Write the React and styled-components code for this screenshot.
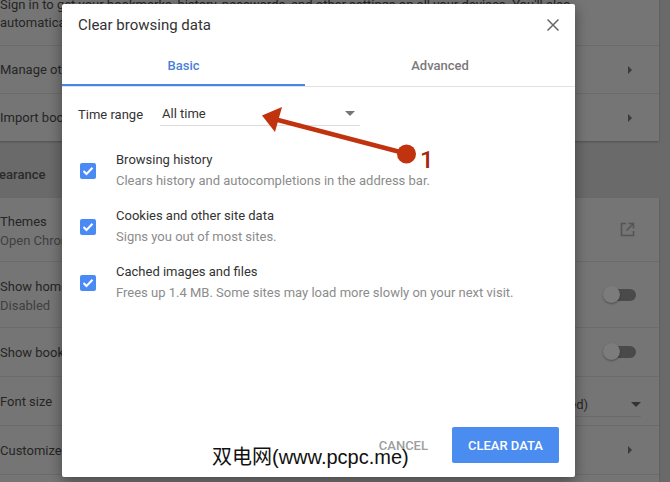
import React from "react";
import styled, { createGlobalStyle } from "styled-components";

const GlobalStyle = createGlobalStyle`
  html, body {
    margin: 0;
    padding: 0;
  }
  body {
    width: 670px;
    height: 482px;
    overflow: hidden;
    background: #6a6a6a;
    font-family: Roboto, "Liberation Sans", sans-serif;
  }
`;

const Page = styled.div`
  position: relative;
  width: 670px;
  height: 482px;
  overflow: hidden;
  background: #6a6a6a;
`;

/* dimmed settings page behind the dialog */
const SettingsColumn = styled.div`
  width: 679px;
  margin-left: -20px;
  margin-top: -14px;
`;

const Card = styled.section`
  background: #757575;
  box-shadow: 0 1px 2px rgba(0, 0, 0, 0.25);
  padding-left: 20px;
`;

const Row = styled.div`
  display: flex;
  align-items: center;
  justify-content: space-between;
  min-height: ${(p) => p.$h || 48}px;
  padding-right: ${(p) => p.$pr || 26}px;
  box-sizing: border-box;
  border-top: ${(p) => (p.$first ? "none" : "1px solid #6b6b6b")};
  font-size: 13px;
`;

const RowText = styled.div`
  display: flex;
  flex-direction: column;
  padding: ${(p) => p.$pad || "0"};
`;

const Primary = styled.span`
  color: #252525;
  line-height: ${(p) => p.$lh || 19}px;
`;

const Secondary = styled.span`
  color: #404040;
  line-height: 19px;
`;

const SectionHeading = styled.h2`
  margin: 0 0 0 -4px;
  padding: 24px 0 13px;
  line-height: 20px;
  font-size: 13px;
  font-weight: 500;
  color: #2a2a2a;
`;

const Toggle = styled.span`
  position: relative;
  width: 34px;
  height: 18px;
  display: inline-block;
`;

const Track = styled.span`
  position: absolute;
  left: 8px;
  top: 3px;
  width: 25px;
  height: 12px;
  border-radius: 6px;
  background: #4a4a4a;
`;

const Knob = styled.span`
  position: absolute;
  left: 0;
  top: 0;
  width: 17px;
  height: 17px;
  border-radius: 50%;
  background: #7c7c7c;
  box-shadow: 0 1px 2px rgba(0, 0, 0, 0.35);
`;

const FontSelect = styled.div`
  display: flex;
  align-items: center;
  justify-content: space-between;
  width: 200px;
  height: 22px;
  margin-top: 8px;
  margin-right: -8px;
  border-bottom: 1px solid #6a6a6a;
  color: #252525;
`;

const Arrow = () => (
  <svg width="6" height="10" viewBox="0 0 6 10">
    <path d="M1 1 L5 5 L1 9 Z" fill="#3a3a3a" />
  </svg>
);

const Caret = ({ color }) => (
  <svg width="10" height="5" viewBox="0 0 10 5">
    <path d="M0 0 H10 L5 5 Z" fill={color} />
  </svg>
);

const ExternalIcon = () => (
  <svg width="15" height="15" viewBox="0 0 15 15">
    <path d="M6 1.5 H1.5 V13.5 H13.5 V9" fill="none" stroke="#555" strokeWidth="1.6" />
    <path d="M8.5 1.5 H13.5 V6.5 M13.5 1.5 L6.5 8.5" fill="none" stroke="#555" strokeWidth="1.6" />
  </svg>
);

/* the dialog */
const Dialog = styled.div`
  position: absolute;
  left: 62px;
  top: 4px;
  width: 513px;
  height: 473px;
  background: #fff;
  border-radius: 2px;
  box-shadow: 0 4px 14px rgba(0, 0, 0, 0.4);
  display: flex;
  flex-direction: column;
  font-family: Roboto, "Liberation Sans", sans-serif;
`;

const DialogHeader = styled.div`
  height: 42px;
  display: flex;
  align-items: center;
  justify-content: space-between;
  padding: 0 16px;
`;

const Title = styled.h1`
  margin: 0;
  font-size: 15px;
  font-weight: 400;
  color: #333;
`;

const CloseButton = styled.button`
  border: none;
  background: none;
  padding: 0;
  width: 12px;
  height: 12px;
  display: flex;
`;

const TabBar = styled.div`
  display: flex;
  border-bottom: 1px solid #e2e2e2;
`;

const Tab = styled.div`
  ${(p) => (p.$w ? `width: ${p.$w}px;` : "flex: 1;")}
  height: 40px;
  box-sizing: border-box;
  display: flex;
  align-items: center;
  justify-content: center;
  font-size: 13px;
  font-weight: 500;
  color: ${(p) => (p.$active ? "#4a80d8" : "#7a7a7a")};
  border-bottom: 2px solid ${(p) => (p.$active ? "#4a86e8" : "transparent")};
`;

const DialogBody = styled.div`
  padding: 0 16px;
  display: flex;
  flex-direction: column;
`;

const TimeRow = styled.div`
  margin-top: 13px;
  height: 28px;
  display: flex;
  align-items: center;
  font-size: 13px;
  color: #333;
`;

const TimeLabel = styled.span`
  width: 82px;
`;

const Select = styled.div`
  width: 200px;
  height: 24px;
  box-sizing: border-box;
  display: flex;
  align-items: center;
  justify-content: space-between;
  padding: 0 5px 0 2px;
  border-bottom: 1px solid #dcdcdc;
  color: #333;
`;

const CheckList = styled.div`
  margin-top: 22px;
  display: flex;
  flex-direction: column;
  gap: 14px;
`;

const CheckItem = styled.div`
  display: flex;
  align-items: center;
`;

const Checkbox = styled.span`
  width: 16px;
  height: 16px;
  border-radius: 2px;
  background: #4a8af4;
  margin: 0 20px 0 2px;
  display: flex;
  align-items: center;
  justify-content: center;
`;

const ItemText = styled.div`
  display: flex;
  flex-direction: column;
  font-size: 13px;
`;

const ItemTitle = styled.span`
  color: #333;
  line-height: 20px;
`;

const ItemDesc = styled.span`
  color: #8c8c8c;
  line-height: 22px;
`;

const Footer = styled.div`
  margin-top: auto;
  display: flex;
  justify-content: flex-end;
  align-items: center;
  gap: 8px;
  padding: 0 16px 14px;
`;

const Button = styled.button`
  height: 36px;
  padding: 0 16px;
  border: none;
  border-radius: 2px;
  font-family: Roboto, "Liberation Sans", sans-serif;
  font-size: 13px;
  font-weight: 500;
  background: ${(p) => (p.$primary ? "#4a8cf0" : "transparent")};
  color: ${(p) => (p.$primary ? "#fff" : "#9e9e9e")};
`;

/* annotation + watermark overlaid on the screenshot */
const Annotation = styled.svg`
  position: absolute;
  left: 0;
  top: 0;
  pointer-events: none;
`;

const Marker = styled.span`
  position: absolute;
  left: 420px;
  top: 145px;
  font-family: Roboto, "Liberation Sans", sans-serif;
  font-size: 24px;
  font-weight: 500;
  line-height: 30px;
  color: #a5260f;
`;

const Watermark = styled.span`
  position: absolute;
  left: 212px;
  top: 442px;
  font-family: "Liberation Sans", "Noto Sans CJK SC", sans-serif;
  font-size: 20px;
  line-height: 30px;
  color: #111;
`;

const Check = () => (
  <svg width="12" height="10" viewBox="0 0 12 10">
    <path d="M1.5 5 L4.5 8 L10.5 1.8" fill="none" stroke="#fff" strokeWidth="2" />
  </svg>
);

const items = [
  ["Browsing history", "Clears history and autocompletions in the address bar."],
  ["Cookies and other site data", "Signs you out of most sites."],
  ["Cached images and files", "Frees up 1.4 MB. Some sites may load more slowly on your next visit."],
];

export default function App() {
  return (
    <Page>
      <GlobalStyle />
      <SettingsColumn>
        <Card>
          <Row $first $h={59}>
            <RowText $pad="10px 0 13px">
              <Primary $lh={18}>
                Sign in to get your bookmarks, history, passwords, and other settings on all your devices. You'll also
              </Primary>
              <Primary $lh={18}>automatically be signed in to your Google services.</Primary>
            </RowText>
          </Row>
          <Row>
            <Primary>Manage other people</Primary>
            <Arrow />
          </Row>
          <Row>
            <Primary>Import bookmarks and settings</Primary>
            <Arrow />
          </Row>
        </Card>
        <SectionHeading>Appearance</SectionHeading>
        <Card>
          <Row $first $h={63} $pr={24}>
            <RowText $pad="3px 0 0">
              <Primary>Themes</Primary>
              <Secondary>Open Chrome Web Store</Secondary>
            </RowText>
            <ExternalIcon />
          </Row>
          <Row $h={66} $pr={22}>
            <RowText $pad="2px 0 0">
              <Primary>Show home button</Primary>
              <Secondary>Disabled</Secondary>
            </RowText>
            <Toggle>
              <Track />
              <Knob />
            </Toggle>
          </Row>
          <Row $h={49} $pr={22}>
            <Primary>Show bookmarks bar</Primary>
            <Toggle>
              <Track />
              <Knob />
            </Toggle>
          </Row>
          <Row $h={49}>
            <Primary>Font size</Primary>
            <FontSelect>
              <span>Medium (Recommended)</span>
              <Caret color="#333" />
            </FontSelect>
          </Row>
          <Row $h={49}>
            <Primary>Customize fonts</Primary>
            <Arrow />
          </Row>
          <Row $h={48}>
            <Primary>Languages</Primary>
            <Arrow />
          </Row>
        </Card>
      </SettingsColumn>

      <Dialog>
        <DialogHeader>
          <Title>Clear browsing data</Title>
          <CloseButton aria-label="Close">
            <svg width="12" height="12" viewBox="0 0 12 12">
              <path d="M0.5 0.5 L11.5 11.5 M11.5 0.5 L0.5 11.5" stroke="#666" strokeWidth="1.5" />
            </svg>
          </CloseButton>
        </DialogHeader>
        <TabBar>
          <Tab $w={243} $active>Basic</Tab>
          <Tab>Advanced</Tab>
        </TabBar>
        <DialogBody>
          <TimeRow>
            <TimeLabel>Time range</TimeLabel>
            <Select>
              <span>All time</span>
              <Caret color="#757575" />
            </Select>
          </TimeRow>
          <CheckList>
            {items.map(([title, desc]) => (
              <CheckItem key={title}>
                <Checkbox>
                  <Check />
                </Checkbox>
                <ItemText>
                  <ItemTitle>{title}</ItemTitle>
                  <ItemDesc>{desc}</ItemDesc>
                </ItemText>
              </CheckItem>
            ))}
          </CheckList>
        </DialogBody>
        <Footer>
          <Button>CANCEL</Button>
          <Button $primary>CLEAR DATA</Button>
        </Footer>
      </Dialog>

      <Annotation width="670" height="482" viewBox="0 0 670 482">
        <line x1="404" y1="153" x2="276" y2="119.5" stroke="#c1330e" strokeWidth="4.5" />
        <polygon points="262,115.5 282,107 275,132" fill="#c1330e" />
        <circle cx="406.5" cy="154" r="9.5" fill="#c1330e" />
      </Annotation>
      <Marker>1</Marker>
      <Watermark>双电网(www.pcpc.me)</Watermark>
    </Page>
  );
}
